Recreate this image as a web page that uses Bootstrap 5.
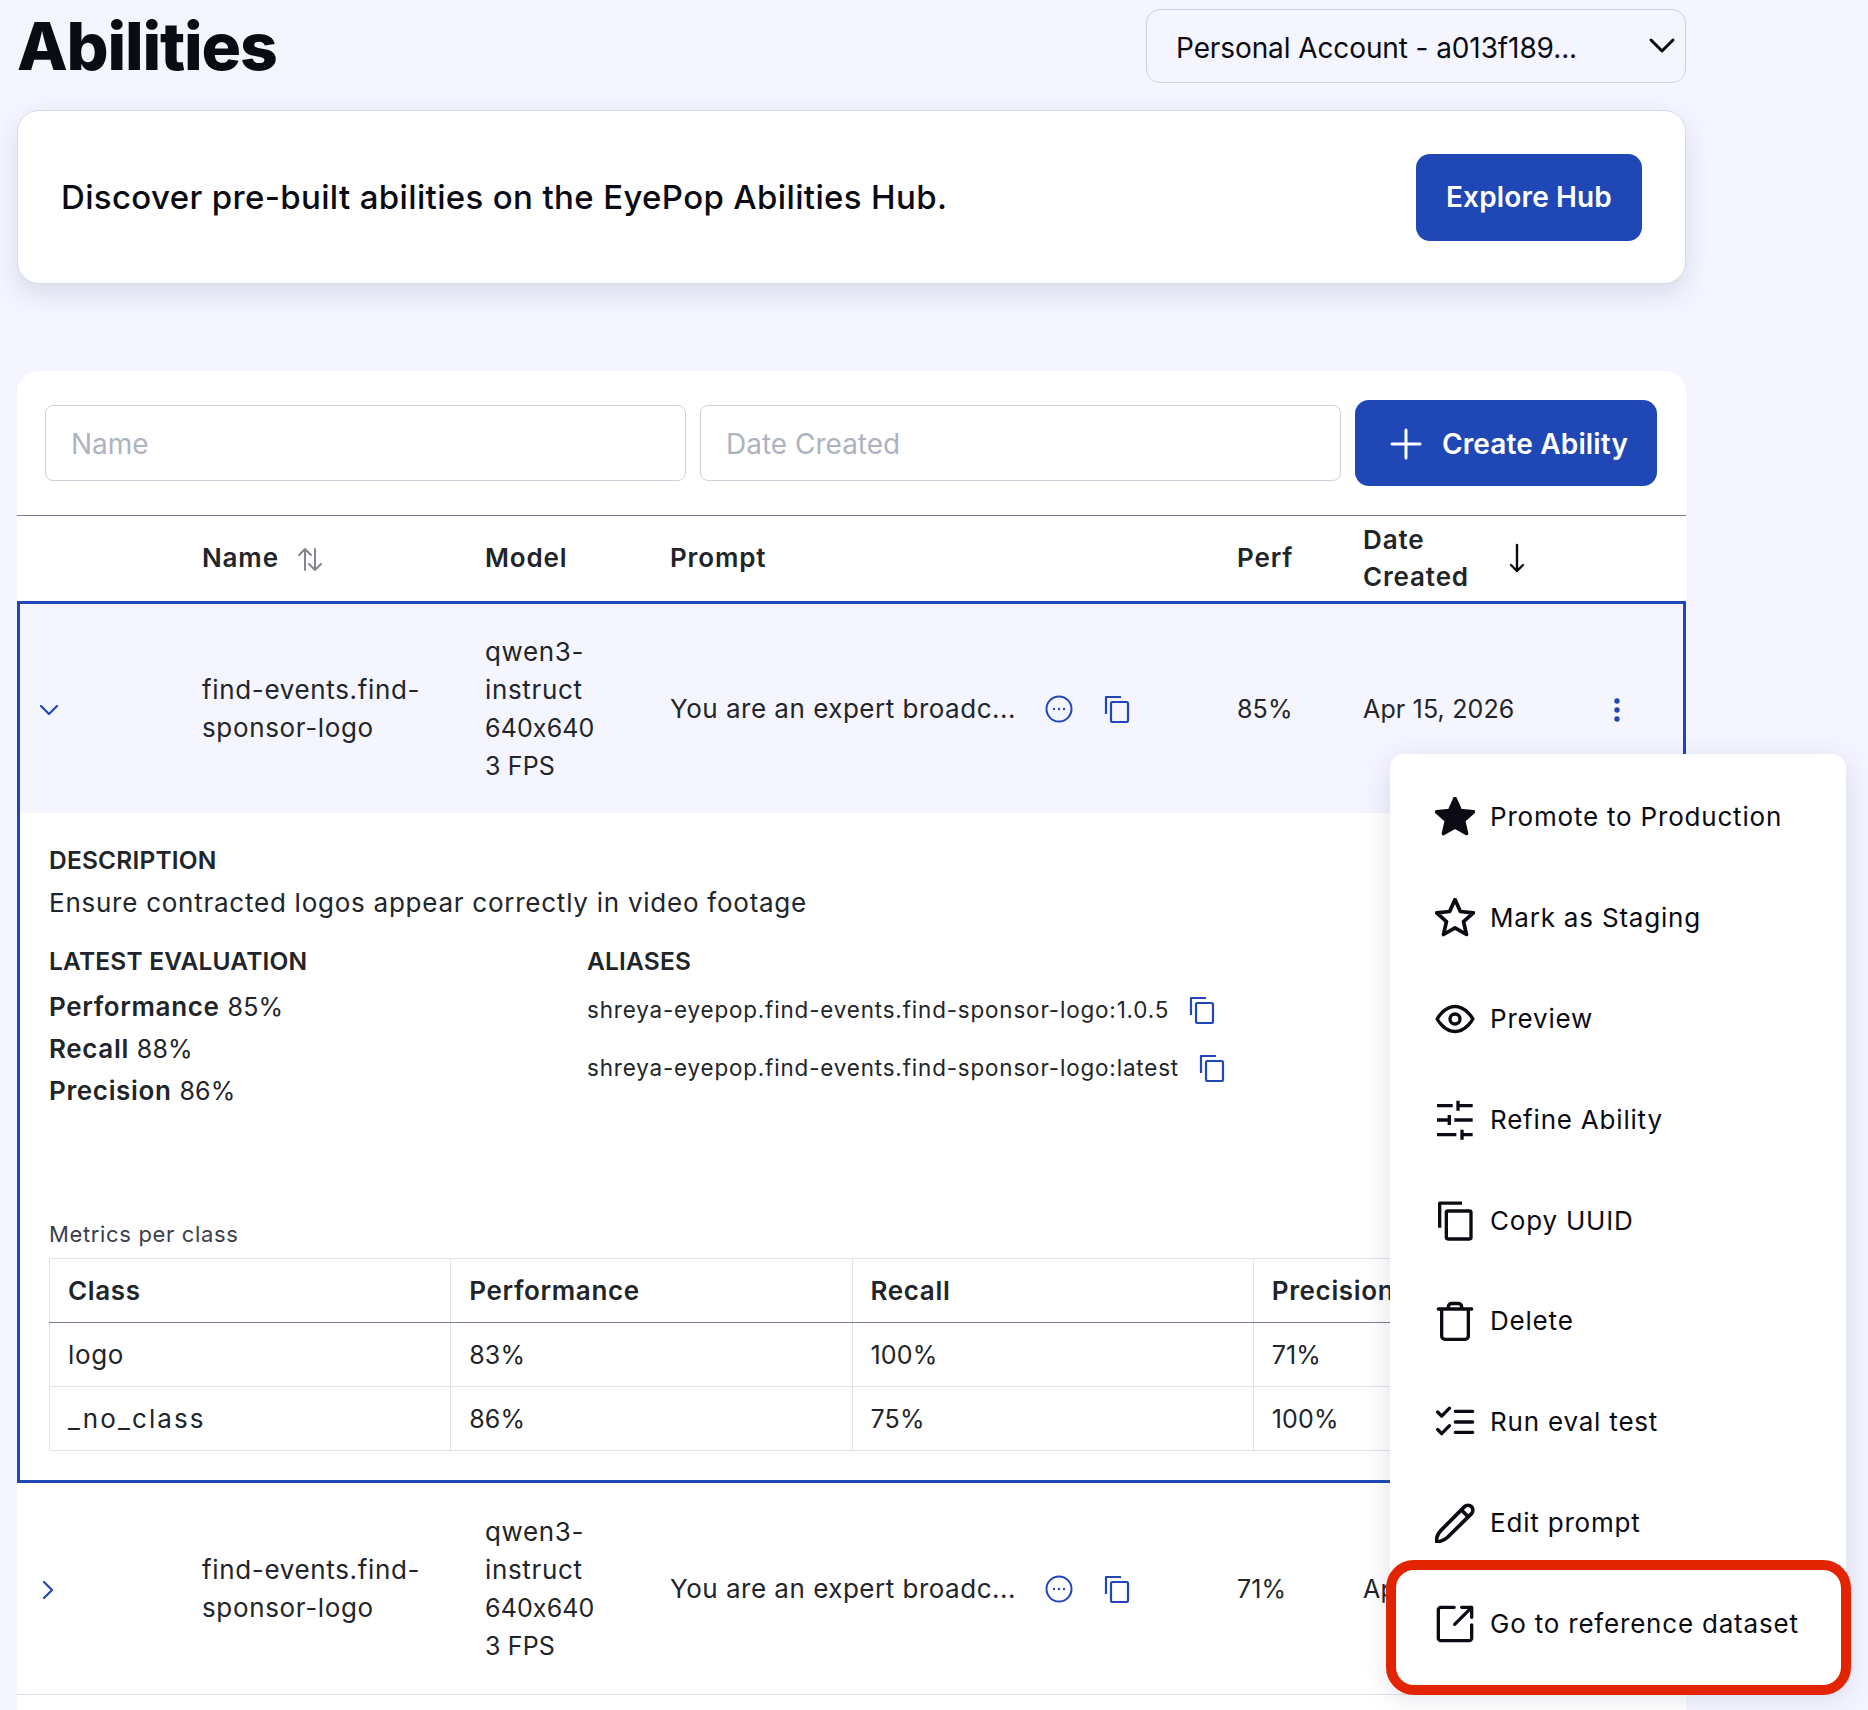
<!DOCTYPE html>
<html lang="en">
<head>
<meta charset="utf-8">
<title>Abilities</title>
<link href="https://cdn.jsdelivr.net/npm/bootstrap@5.3.0/dist/css/bootstrap.min.css" rel="stylesheet">
<style>
body{background:#f4f5ff;color:#0b0b14;font-family:Inter,"Noto Sans",sans-serif;font-size:26px;line-height:38px;letter-spacing:.65px}
.page-wrap{position:relative;width:1669px;margin-left:17px;padding-top:9px}
.page-title{font-size:66px;font-weight:800;line-height:74px;letter-spacing:-1.2px;margin:0;color:#0b0b14}
.acct-select{width:540px;height:74px;background-color:#f4f5ff;border:1px solid #cdd2de;border-radius:14px;font-size:28px;padding:3px 60px 0 29px;color:#0b0b14;letter-spacing:-.1px;background-size:28px 18px;background-position:right 9px center;background-image:url("data:image/svg+xml,%3csvg xmlns='http://www.w3.org/2000/svg' viewBox='0 0 28 18'%3e%3cpath fill='none' stroke='%230b0b14' stroke-width='3' stroke-linecap='round' stroke-linejoin='round' d='M3 3l11 11L25 3'/%3e%3c/svg%3e")}
.hub-banner{height:174px;margin-top:27px;padding:0 43px;background:#fff;border:1px solid #d8dce8;border-radius:22px;box-shadow:0 10px 24px rgba(60,65,110,.14)}
.hub-text{font-size:33px;font-weight:500;letter-spacing:.35px}
.brand-btn{background:#1f47b5;border:0;color:#fff;border-radius:14px;font-weight:600;font-size:28px;letter-spacing:.15px}
.brand-btn:hover{background:#1f47b5;color:#fff}
.hub-btn{width:226px;height:87px}
.main-panel{margin-top:87px;background:#fff;border-radius:22px 22px 0 0;padding-bottom:15px}
.tool-row{height:145px;padding:0 29px 0 28px;gap:14px;border-bottom:1px solid #7b7e93}
.tool-input{height:76px;border:1px solid #cdd2de;border-radius:8px;font-size:28px;padding:2px 25px 0;letter-spacing:0}
.tool-input::placeholder{color:#aeb3c0}
.create-btn{width:302px;height:86px;flex:none;gap:20px;padding:2px 12px 0 18px}
.ab-table{width:1669px;table-layout:fixed;border-collapse:separate;border-spacing:0;margin:0}
.ab-table th,.ab-table td{padding:0 12px;vertical-align:middle;border:0;background:transparent}
.ab-table th{height:85px;padding-bottom:2px;font-weight:600;line-height:37px;letter-spacing:.85px}
.row-main td{height:212px}
.row-sel td{background:#f4f5ff;border-top:3px solid #1f47b5}
.row-sel td:first-child{border-left:3px solid #1f47b5}
.row-sel td:last-child{border-right:3px solid #1f47b5}
.ab-table .detail-cell{padding:28px 30px 29px 29px;border:3px solid #1f47b5;border-top:0;background:#fff}
.row-plain td{border-bottom:1px solid #dfe1ea}
.ab-table td.chev-open{padding-left:19px}
.ab-table td.chev-closed{padding-left:25px}
.ab-table td.kebab-cell{padding-left:23px}
.prompt-txt{width:375px;flex:none;letter-spacing:.5px}
.copy-mini{margin-left:31px}
.num{font-size:25px;letter-spacing:.15px}
.lbl{font-weight:600;font-size:24.5px;letter-spacing:.2px;margin:0}
.lbl-eval{margin-bottom:6px}
.detail-text{margin-top:5px;letter-spacing:.75px}
.eval-grid{margin-top:20px}
.eval-col{width:538px}
.eval-line{line-height:41px}
.eval-line b{font-weight:600}
.alias-line{font-size:22.4px;height:58px;letter-spacing:.85px;gap:20px}
.alias-first{margin-top:1px}
.metric-cap{font-size:22px;line-height:30px;margin:107px 0 9px;color:#3c3e4a;letter-spacing:.65px}
.class-table{width:1606px;table-layout:fixed;border-collapse:collapse;margin:0}
.ab-table .class-table th,.ab-table .class-table td{height:64px;padding:0 18px;border:1px solid #e1e3ea;line-height:30px}
.ab-table .class-table th{border-bottom:1px solid #7b7e93;letter-spacing:.65px}
.under-name{letter-spacing:2.1px}
.sort-ico{margin-left:18px;vertical-align:-5px}
.date-arrow{margin-left:40px}
.tool-ico{flex:none}
.action-menu{position:absolute;left:1373px;top:754px;width:456px;padding:13px 0;background:#fff;border-radius:14px;box-shadow:0 8px 28px rgba(60,65,110,.16);z-index:5;font-size:26px;letter-spacing:.8px}
.menu-row{height:100.8px;padding-left:45px;gap:15px;color:#0b0b14}
.red-mark{position:absolute;left:-4px;top:806px;width:465px;height:135px;border:10px solid #e32400;border-radius:28px;z-index:6}
</style>
</head>
<body>
<div class="page-wrap">
  <div class="d-flex justify-content-between align-items-center">
    <h1 class="page-title">Abilities</h1>
    <select class="form-select acct-select"><option>Personal Account - a013f189...</option></select>
  </div>

  <div class="hub-banner d-flex justify-content-between align-items-center">
    <div class="hub-text">Discover pre-built abilities on the EyePop Abilities Hub.</div>
    <button class="btn brand-btn hub-btn">Explore Hub</button>
  </div>

  <div class="main-panel">
    <div class="tool-row d-flex align-items-center">
      <input class="form-control tool-input" placeholder="Name">
      <input class="form-control tool-input" placeholder="Date Created">
      <button class="btn brand-btn create-btn d-flex align-items-center justify-content-center">
        <svg width="32" height="32" viewBox="0 0 32 32"><path d="M16 2v28M2 16h28" stroke="#fff" stroke-width="3" stroke-linecap="round"/></svg>
        Create Ability
      </button>
    </div>

    <table class="table ab-table">
      <colgroup><col style="width:173px"><col style="width:283px"><col style="width:185px"><col style="width:567px"><col style="width:126px"><col style="width:239px"><col style="width:96px"></colgroup>
      <thead>
        <tr>
          <th></th>
          <th>Name<svg class="sort-ico" width="26" height="25" viewBox="0 0 26 25" fill="none" stroke="#85878f" stroke-width="2" stroke-linecap="round" stroke-linejoin="round"><path d="M8 23V2M2 8l6-6 6 6M18 2v21M12 17l6 6 6-6"/></svg></th>
          <th>Model</th>
          <th>Prompt</th>
          <th>Perf</th>
          <th>
            <div class="d-flex align-items-center">
              <span>Date<br>Created</span>
              <svg class="date-arrow" width="16" height="30" viewBox="0 0 16 30" fill="none" stroke="#0b0b14" stroke-width="2.4" stroke-linecap="round" stroke-linejoin="round"><path d="M8 2v26M2 22l6 6 6-6"/></svg>
            </div>
          </th>
          <th></th>
        </tr>
      </thead>
      <tbody>
        <tr class="row-main row-sel">
          <td class="chev-open"><svg width="20" height="12" viewBox="0 0 20 12" fill="none" stroke="#1f47b5" stroke-width="2.2" stroke-linecap="round" stroke-linejoin="round"><path d="M2 2l8 8 8-8"/></svg></td>
          <td>find-events.find-<br>sponsor-logo</td>
          <td>qwen3-<br>instruct<br><span class="num">640x640</span><br><span class="num">3 FPS</span></td>
          <td>
            <div class="d-flex align-items-center">
              <span class="text-nowrap prompt-txt">You are an expert broadc...</span>
              <svg class="tool-ico" width="28" height="28" viewBox="0 0 28 28" fill="#1f47b5"><circle cx="14" cy="14" r="12.5" fill="none" stroke="#1f47b5" stroke-width="2"/><circle cx="9" cy="14" r="1.2"/><circle cx="14" cy="14" r="1.2"/><circle cx="19" cy="14" r="1.2"/></svg>
              <svg class="tool-ico copy-mini" width="26" height="28" viewBox="0 0 26 28" fill="none" stroke="#1f47b5" stroke-width="2.2" stroke-linejoin="round"><path d="M2 19V2h15"/><rect x="7" y="7" width="17" height="20" rx="1.5"/></svg>
            </div>
          </td>
          <td><span class="num">85%</span></td>
          <td class="text-nowrap"><span class="num">Apr 15, 2026</span></td>
          <td class="kebab-cell"><svg width="8" height="26" viewBox="0 0 8 26" fill="#1f47b5"><circle cx="4" cy="4" r="2.7"/><circle cx="4" cy="13" r="2.7"/><circle cx="4" cy="22" r="2.7"/></svg></td>
        </tr>
        <tr>
          <td colspan="7" class="detail-cell">
            <p class="lbl">DESCRIPTION</p>
            <div class="detail-text">Ensure contracted logos appear correctly in video footage</div>
            <div class="eval-grid d-flex">
              <div class="eval-col">
                <p class="lbl lbl-eval">LATEST EVALUATION</p>
                <div class="eval-line"><b>Performance</b> <span class="num">85%</span></div>
                <div class="eval-line"><b>Recall</b> <span class="num">88%</span></div>
                <div class="eval-line"><b>Precision</b> <span class="num">86%</span></div>
              </div>
              <div>
                <p class="lbl">ALIASES</p>
                <div class="alias-line alias-first d-flex align-items-center">shreya-eyepop.find-events.find-sponsor-logo:1.0.5
                  <svg class="tool-ico" width="26" height="28" viewBox="0 0 26 28" fill="none" stroke="#1f47b5" stroke-width="2.2" stroke-linejoin="round"><path d="M2 19V2h15"/><rect x="7" y="7" width="17" height="20" rx="1.5"/></svg></div>
                <div class="alias-line d-flex align-items-center">shreya-eyepop.find-events.find-sponsor-logo:latest
                  <svg class="tool-ico" width="26" height="28" viewBox="0 0 26 28" fill="none" stroke="#1f47b5" stroke-width="2.2" stroke-linejoin="round"><path d="M2 19V2h15"/><rect x="7" y="7" width="17" height="20" rx="1.5"/></svg></div>
              </div>
            </div>
            <p class="metric-cap">Metrics per class</p>
            <table class="class-table">
              <thead><tr><th>Class</th><th>Performance</th><th>Recall</th><th>Precision</th></tr></thead>
              <tbody>
                <tr><td>logo</td><td><span class="num">83%</span></td><td><span class="num">100%</span></td><td><span class="num">71%</span></td></tr>
                <tr><td class="under-name">_no_class</td><td><span class="num">86%</span></td><td><span class="num">75%</span></td><td><span class="num">100%</span></td></tr>
              </tbody>
            </table>
          </td>
        </tr>
        <tr class="row-main row-plain">
          <td class="chev-closed"><svg width="12" height="20" viewBox="0 0 12 20" fill="none" stroke="#1f47b5" stroke-width="2.2" stroke-linecap="round" stroke-linejoin="round"><path d="M2 2l8 8-8 8"/></svg></td>
          <td>find-events.find-<br>sponsor-logo</td>
          <td>qwen3-<br>instruct<br><span class="num">640x640</span><br><span class="num">3 FPS</span></td>
          <td>
            <div class="d-flex align-items-center">
              <span class="text-nowrap prompt-txt">You are an expert broadc...</span>
              <svg class="tool-ico" width="28" height="28" viewBox="0 0 28 28" fill="#1f47b5"><circle cx="14" cy="14" r="12.5" fill="none" stroke="#1f47b5" stroke-width="2"/><circle cx="9" cy="14" r="1.2"/><circle cx="14" cy="14" r="1.2"/><circle cx="19" cy="14" r="1.2"/></svg>
              <svg class="tool-ico copy-mini" width="26" height="28" viewBox="0 0 26 28" fill="none" stroke="#1f47b5" stroke-width="2.2" stroke-linejoin="round"><path d="M2 19V2h15"/><rect x="7" y="7" width="17" height="20" rx="1.5"/></svg>
            </div>
          </td>
          <td><span class="num">71%</span></td>
          <td class="text-nowrap"><span class="num">Apr 15, 2026</span></td>
          <td></td>
        </tr>
      </tbody>
    </table>
  </div>

  <div class="action-menu">
    <div class="menu-row d-flex align-items-center"><svg class="tool-ico" width="40" height="40" viewBox="1.2 1.2 21.6 21.6" fill="#0b0b14" stroke="#0b0b14" stroke-width="2" stroke-linejoin="round"><path d="M12 2l2.9 6.5 7 .7-5.3 4.7 1.6 7L12 17.3 5.8 20.900l1.600-7L2.100 9.200l7-.7z"/></svg>Promote to Production</div>
    <div class="menu-row d-flex align-items-center"><svg class="tool-ico" width="40" height="40" viewBox="1.2 1.2 21.6 21.6" fill="none" stroke="#0b0b14" stroke-width="2" stroke-linejoin="round"><path d="M12 2l2.9 6.500 7 .7-5.300 4.700 1.600 7L12 17.300 5.800 20.900l1.600-7L2.100 9.200l7-.7z"/></svg>Mark as Staging</div>
    <div class="menu-row d-flex align-items-center"><svg class="tool-ico" width="40" height="40" viewBox="0 0 24 24" fill="none" stroke="#0b0b14" stroke-width="2"><path d="M1.300 12S5.300 4.500 12 4.500 22.700 12 22.700 12 18.700 19.500 12 19.500 1.300 12 1.300 12z"/><circle cx="12" cy="12" r="3"/></svg>Preview</div>
    <div class="menu-row d-flex align-items-center"><svg class="tool-ico" width="40" height="40" viewBox="0 0 24 24" fill="none" stroke="#0b0b14" stroke-width="2" stroke-linecap="butt"><path d="M1.200 3.400h9.400M13.800 3.400h8.800M13.800.4v6M1.200 12h7.400M11.600 12h11M8.600 9v6M1.200 20.800h11.600M16.200 20.800h6.400M16.200 17.800v6"/></svg>Refine Ability</div>
    <div class="menu-row d-flex align-items-center"><svg class="tool-ico" width="40" height="40" viewBox="0 0 24 24" fill="none" stroke="#0b0b14" stroke-width="2" stroke-linejoin="round"><path d="M2.800 16V1.300H16.200"/><rect x="6.800" y="6" width="14.800" height="16.800" rx="1"/></svg>Copy UUID</div>
    <div class="menu-row d-flex align-items-center"><svg class="tool-ico" width="40" height="40" viewBox="0 0 24 24" fill="none" stroke="#0b0b14" stroke-width="2" stroke-linecap="round"><path d="M2 4.800h20M4 4.800V21a2 2 0 0 0 2 2h12a2 2 0 0 0 2-2V4.800M8 4.800V3.500a2 2 0 0 1 2-2h4a2 2 0 0 1 2 2v1.300"/></svg>Delete</div>
    <div class="menu-row d-flex align-items-center"><svg class="tool-ico" width="40" height="40" viewBox="0 0 24 24" fill="none" stroke="#0b0b14" stroke-width="2" stroke-linecap="round" stroke-linejoin="round"><path d="M12.200 5.600h10.400M12.200 12h10.400M12.200 18.200h10.400M1.600 6l2.400 2.500 4.700-4.800M1.600 16.500 4 19l4.700-4.800"/></svg>Run eval test</div>
    <div class="menu-row d-flex align-items-center"><svg class="tool-ico" width="40" height="40" viewBox="1.2 1.2 21.6 21.6" fill="none" stroke="#0b0b14" stroke-width="2" stroke-linejoin="round"><path d="M1.700 22.300c.3-2.600 1-4.600 2.700-6.300L17 3.300a2.900 2.900 0 0 1 4 0 2.900 2.900 0 0 1-.2 3.800L8 19.700c-1.700 1.600-3.600 2.300-6.300 2.600zM15.500 5l3.800 3.800"/></svg>Edit prompt</div>
    <div class="menu-row d-flex align-items-center"><svg class="tool-ico" width="40" height="40" viewBox="0 0 24 24" fill="none" stroke="#0b0b14" stroke-width="2" stroke-linecap="round" stroke-linejoin="round"><path d="M11.500 2H3.500A1.500 1.500 0 0 0 2 3.500v17A1.500 1.500 0 0 0 3.500 22h17a1.500 1.500 0 0 0 1.500-1.500v-8M11.800 12.200 22 2M16 2h6v6"/></svg>Go to reference dataset</div>
    <div class="red-mark"></div>
  </div>
</div>
</body>
</html>
